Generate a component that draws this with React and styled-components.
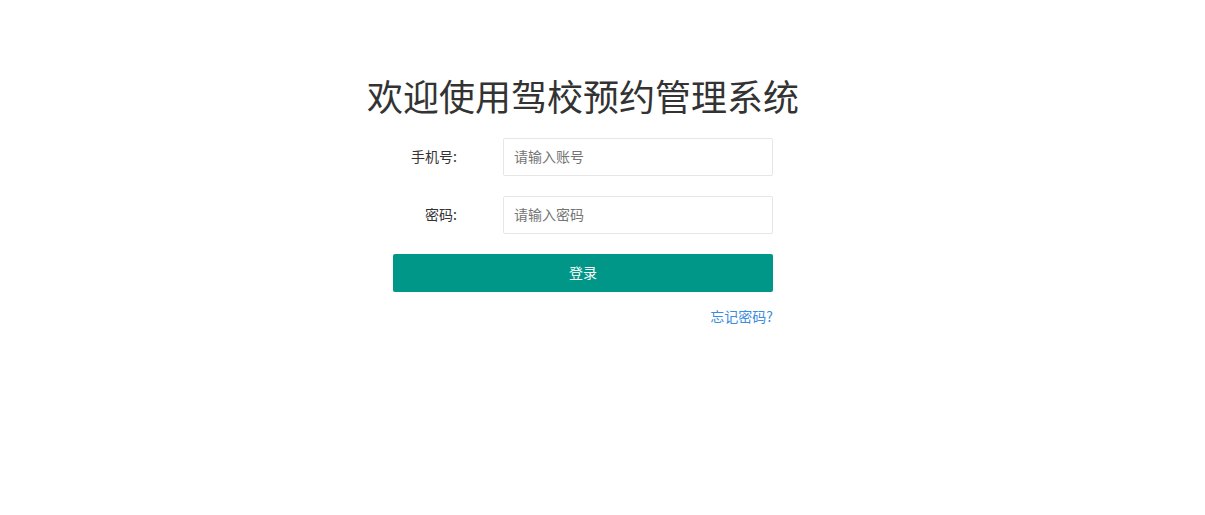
import React from "react";
import styled, { createGlobalStyle } from "styled-components";

const Global = createGlobalStyle`
  body {
    margin: 0;
    background: #fff;
    font-family: "Noto Sans CJK SC", "Noto Sans", sans-serif;
    color: #333;
  }
`;

const Page = styled.div`
  display: flex;
  justify-content: center;
  padding: 70px 39px 0 0;
`;

const Box = styled.div`
  width: 380px;
  display: flex;
  flex-direction: column;
`;

const Title = styled.h1`
  margin: 0 -30px 18px;
  font-size: 36px;
  font-weight: 400;
  line-height: 50px;
  text-align: center;
  color: #333;
`;

const Row = styled.div`
  display: grid;
  grid-template-columns: 64px 270px;
  column-gap: 46px;
  align-items: center;
  margin-bottom: 20px;
`;

const Label = styled.label`
  font-size: 14px;
  line-height: 20px;
  text-align: right;
  color: #333;
  margin-top: -2px;
`;

const Input = styled.input`
  box-sizing: border-box;
  height: 38px;
  width: 100%;
  padding: 0 10px 2px;
  border: 1px solid #e6e6e6;
  border-radius: 2px;
  font-family: inherit;
  font-size: 14px;
  color: #333;
  outline: none;
  &::placeholder {
    color: #757575;
  }
`;

const Button = styled.button`
  height: 38px;
  padding: 0 0 2px;
  border: none;
  border-radius: 2px;
  background: #009688;
  color: #fff;
  font-family: inherit;
  font-size: 14px;
  cursor: pointer;
`;

const Links = styled.div`
  display: flex;
  justify-content: flex-end;
  margin-top: 14px;
`;

const Link = styled.a`
  font-size: 14px;
  color: #3c8dde;
  text-decoration: none;
`;

export default function App() {
  return (
    <>
      <Global />
      <Page>
        <Box>
          <Title>欢迎使用驾校预约管理系统</Title>
          <Row>
            <Label>手机号:</Label>
            <Input placeholder="请输入账号" />
          </Row>
          <Row>
            <Label>密码:</Label>
            <Input type="password" placeholder="请输入密码" />
          </Row>
          <Button>登录</Button>
          <Links>
            <Link href="#">忘记密码?</Link>
          </Links>
        </Box>
      </Page>
    </>
  );
}
